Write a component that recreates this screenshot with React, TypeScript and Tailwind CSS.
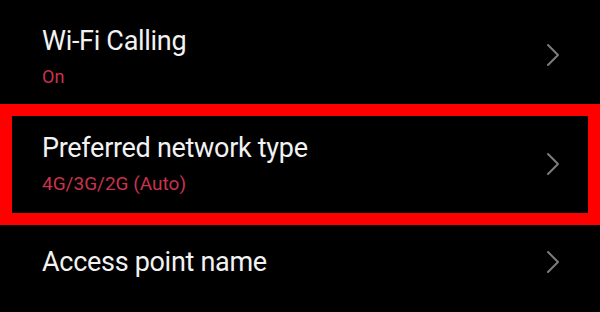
import React from 'react';

const Chevron: React.FC<{ className?: string }> = ({ className }) => (
  <svg width="14" height="24" viewBox="0 0 14 24" className={className} fill="none">
    <polyline points="2,2 12,12 2,22" stroke="#7c7c7c" strokeWidth="2" strokeLinecap="round" strokeLinejoin="round" />
  </svg>
);

export default function App() {
  return (
    <div className="w-[600px] h-[312px] overflow-hidden bg-black text-[#f2f2f2] font-['Roboto',sans-serif]">
      <div className="h-[104px] flex items-start justify-between pl-[42px] pr-[40px]">
        <div className="pt-[25px]">
          <div className="text-[27px] leading-[32px] tracking-[-0.3px]">Wi-Fi Calling</div>
          <div className="mt-[9px] text-[18px] leading-[21px] text-[#c8334c]">On</div>
        </div>
        <Chevron className="mt-[43px]" />
      </div>

      <div className="h-[121px] border-[12px] border-[#ff0000] flex items-start justify-between pl-[30px] pr-[28px]">
        <div className="pt-[16px]">
          <div className="text-[27px] leading-[32px] tracking-[-0.3px]">Preferred network type</div>
          <div className="mt-[9px] text-[19px] leading-[22px] text-[#c8334c]">4G/3G/2G (Auto)</div>
        </div>
        <Chevron className="mt-[36px]" />
      </div>

      <div className="h-[87px] flex items-start justify-between pl-[42px] pr-[40px]">
        <div className="pt-[21px]">
          <div className="text-[27px] leading-[32px] tracking-[-0.3px]">Access point name</div>
        </div>
        <Chevron className="mt-[25px]" />
      </div>
    </div>
  );
}
